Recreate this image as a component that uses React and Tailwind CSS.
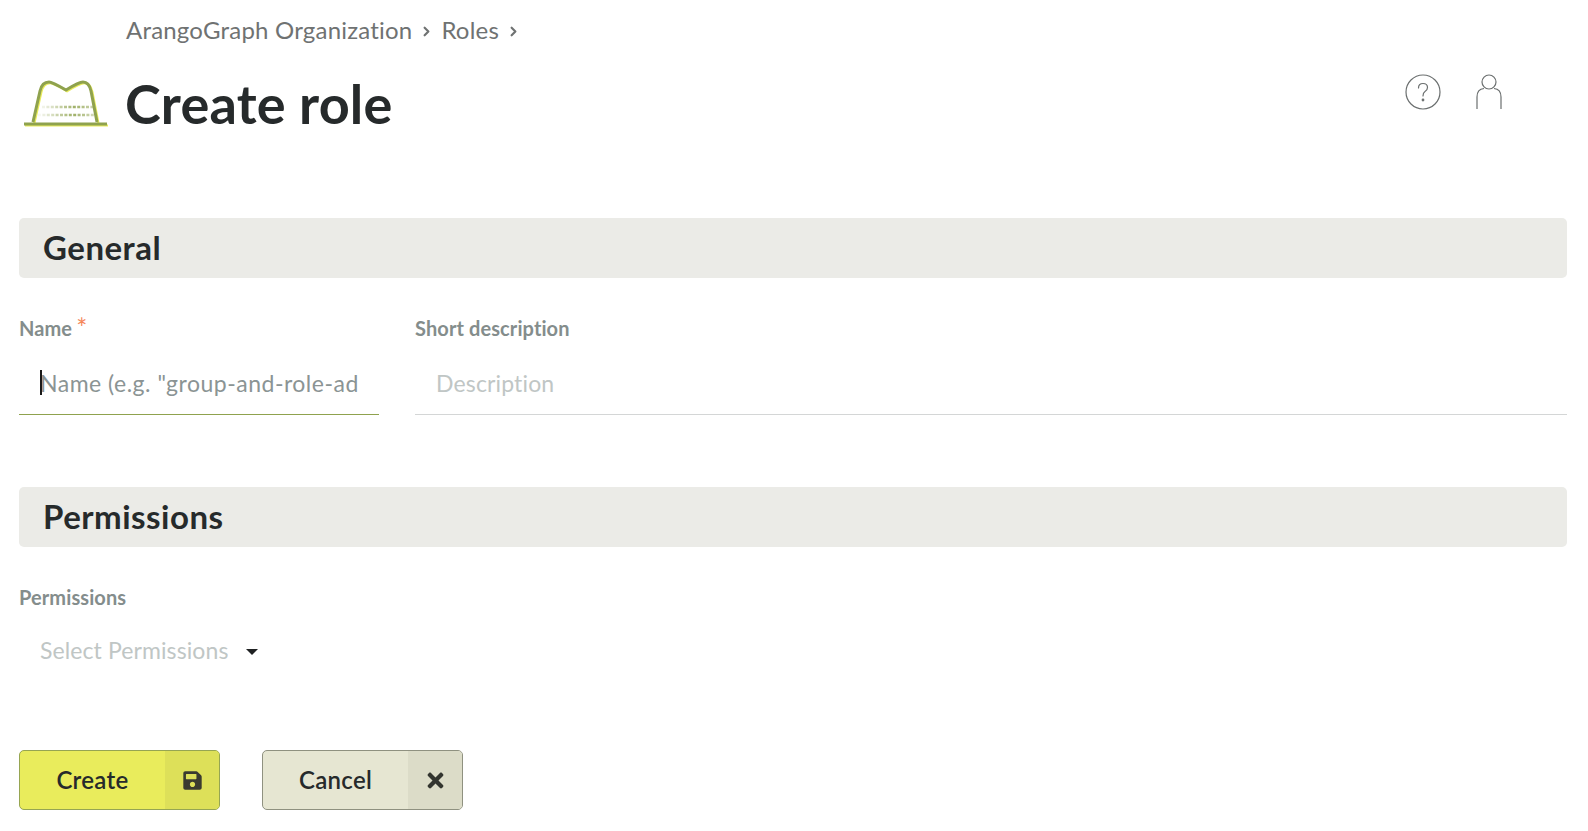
import React from 'react';
import { ChevronRight } from 'lucide-react';
import { FaSave, FaTimes } from 'react-icons/fa';

const HAT_DOTS = [
  { y: 32, from: 19, count: 12 },
  { y: 40, from: 15, count: 13 },
];

function HatLogo() {
  const crown = 'M10 47 L17 16 Q19 7 26 7 Q29 7 43 15 Q56 7 60 7 Q66 7 68 16 L74 47';
  return (
    <svg width="86" height="52" viewBox="0 0 86 52" fill="none">
      <path d={crown} stroke="#e9ec5c" strokeWidth="2.6" transform="translate(1.2 1)" />
      <path d={crown} stroke="#8fa24e" strokeWidth="3" strokeLinejoin="round" />
      <path d="M2 50.5 H85" stroke="#e9ec5c" strokeWidth="2" />
      <path d="M1 49 H84" stroke="#8fa24e" strokeWidth="3" />
      {HAT_DOTS.map((row) =>
        Array.from({ length: row.count }).map((_, i) => (
          <rect
            key={`${row.y}-${i}`}
            x={row.from + i * 4.4}
            y={row.y - 1.25}
            width="3"
            height="2.5"
            fill="#8fa24e"
            opacity={0.85 - Math.abs(i - row.count * 0.6) * 0.1}
          />
        ))
      )}
    </svg>
  );
}

function HelpIcon() {
  return (
    <svg width="36" height="36" viewBox="0 0 36 36" fill="none" stroke="#6b6f6f" strokeWidth="1.2">
      <circle cx="18" cy="18" r="17" />
      <path d="M13.5 14 Q13.5 9.5 18 9.5 Q22.5 9.5 22.5 13.5 Q22.5 16 20 17.5 Q18 18.8 18 22" strokeLinecap="round" />
      <circle cx="18" cy="26" r="0.8" fill="#6b6f6f" />
    </svg>
  );
}

function UserIcon() {
  return (
    <svg width="26" height="36" viewBox="0 0 26 36" fill="none" stroke="#6b6f6f" strokeWidth="1.2">
      <circle cx="13" cy="8" r="7" />
      <path d="M1 35 V23 Q1 15 8 14.5 M25 35 V23 Q25 15 18 14.5" />
    </svg>
  );
}

function SectionHeader({ children }) {
  return (
    <div className="h-[60px] rounded-[5px] bg-[#ebebe7] pl-6 flex items-center text-[33px] tracking-[0.5px] font-bold text-[#262a2b]">
      {children}
    </div>
  );
}

function FieldLabel({ children }) {
  return <div className="text-[20px] leading-6 tracking-[0.1px] font-bold text-[#848d8c]">{children}</div>;
}

export default function App() {
  return (
    <div className="min-h-[831px] bg-white font-['Lato',sans-serif] pl-[19px] pr-[21px] overflow-hidden">
      {/* Breadcrumb */}
      <div className="h-[60px] pl-[107px] pt-[15px] flex items-start text-[24px] leading-[30px] tracking-[0.2px] text-[#6f7272]">
        <span>ArangoGraph Organization</span>
        <ChevronRight className="w-[15px] h-[15px] mx-[7px] mt-[9px]" strokeWidth={3.5} />
        <span>Roles</span>
        <ChevronRight className="w-[15px] h-[15px] mx-[7px] mt-[9px]" strokeWidth={3.5} />
      </div>

      {/* Title row */}
      <div className="h-[158px] flex items-start">
        <div className="ml-[4px] mt-[15px] w-[102px] shrink-0">
          <HatLogo />
        </div>
        <h1 className="text-[54px] leading-[88px] tracking-[0.2px] font-bold text-[#262a2b]">Create role</h1>
        <div className="ml-auto mr-[65px] mt-[14px] flex items-center gap-[35px]">
          <HelpIcon />
          <UserIcon />
        </div>
      </div>

      <SectionHeader>General</SectionHeader>

      <div className="mt-[38px] flex gap-[36px]">
        <div className="w-[360px] shrink-0">
          <div className="flex items-start">
            <FieldLabel>Name</FieldLabel>
            <span className="ml-1 text-[26px] leading-6 text-[#f5875a]">*</span>
          </div>
          <div className="mt-[11px] h-[64px] border-b border-[#8fa24e] relative">
            <span className="absolute left-[21px] top-[19px] h-[25px] w-[2px] bg-[#1a1a1a]" />
            <input
              readOnly
              placeholder={'Name (e.g. "group-and-role-admin")'}
              className="w-full h-full pl-[21px] pr-[20px] text-[23px] tracking-[0.5px] outline-none placeholder:text-[#8b9494]"
            />
          </div>
        </div>
        <div className="flex-1">
          <FieldLabel>Short description</FieldLabel>
          <div className="mt-[11px] h-[64px] border-b border-[#d4d6d6]">
            <input
              readOnly
              placeholder="Description"
              className="w-full h-full pl-[21px] text-[23px] tracking-[0.15px] outline-none placeholder:text-[#c0c6c5]"
            />
          </div>
        </div>
      </div>

      <div className="mt-[72px]">
        <SectionHeader>Permissions</SectionHeader>
      </div>

      <div className="mt-[38px]">
        <FieldLabel>Permissions</FieldLabel>
        <div className="mt-[17px] h-[48px] pl-[21px] flex items-center">
          <span className="text-[23px] tracking-[0.1px] text-[#c0c6c5]">Select Permissions</span>
          <span className="ml-[18px] mt-[3px] w-0 h-0 border-x-[6px] border-x-transparent border-t-[6px] border-t-[#1f2122]" />
        </div>
      </div>

      {/* Actions */}
      <div className="mt-[76px] flex gap-[42px]">
        <button className="w-[201px] h-[60px] rounded-[5px] border border-[#96a552] bg-[#e9ec5c] flex overflow-hidden text-[24px] tracking-[0.3px] font-semibold text-[#262a2b]">
          <span className="flex-1 flex items-center justify-center">Create</span>
          <span className="w-[54px] h-full bg-[#dde059] flex items-center justify-center">
            <FaSave className="w-[21px] h-[21px] text-[#3a3b30]" />
          </span>
        </button>
        <button className="w-[201px] h-[60px] rounded-[5px] border border-[#8f9180] bg-[#e6e6d2] flex overflow-hidden text-[24px] tracking-[0.3px] font-semibold text-[#262a2b]">
          <span className="flex-1 flex items-center justify-center">Cancel</span>
          <span className="w-[54px] h-full bg-[#dcdcc8] flex items-center justify-center">
            <FaTimes className="w-[23px] h-[23px] text-[#33352f]" />
          </span>
        </button>
      </div>
    </div>
  );
}
